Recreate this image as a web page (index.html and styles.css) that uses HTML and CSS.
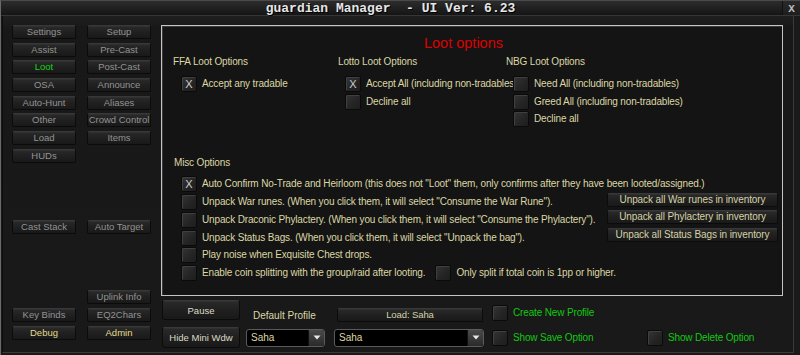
FILE: index.html
```html
<!DOCTYPE html>
<html>
<head>
<meta charset="utf-8">
<link rel="stylesheet" href="styles.css">
</head>
<body>
<div class="window">
  <div class="titlebar">
    <div class="title">guardian Manager&nbsp; - UI Ver: 6.23</div>
    <div class="close">X</div>
  </div>
  <div class="body">
    <nav class="nav">
      <button class="nbtn">Settings</button>
      <button class="nbtn">Assist</button>
      <button class="nbtn active">Loot</button>
      <button class="nbtn">OSA</button>
      <button class="nbtn">Auto-Hunt</button>
      <button class="nbtn">Other</button>
      <button class="nbtn">Load</button>
      <button class="nbtn">HUDs</button>
      <div class="span3"></div>
      <button class="nbtn">Cast Stack</button>
      <div class="span4"></div>
      <button class="nbtn">Key Binds</button>
      <button class="nbtn admin">Debug</button>

      <button class="nbtn">Setup</button>
      <button class="nbtn">Pre-Cast</button>
      <button class="nbtn">Post-Cast</button>
      <button class="nbtn">Announce</button>
      <button class="nbtn">Aliases</button>
      <button class="nbtn">Crowd Control</button>
      <button class="nbtn">Items</button>
      <div class="span4"></div>
      <button class="nbtn">Auto Target</button>
      <div class="span3"></div>
      <button class="nbtn">Uplink Info</button>
      <button class="nbtn">EQ2Chars</button>
      <button class="nbtn admin">Admin</button>
    </nav>

    <div class="main">
      <section class="panel">
        <h1 class="panel-title">Loot options</h1>
        <div class="loot-cols">
          <div class="col col-ffa">
            <h2 class="sec">FFA Loot Options</h2>
            <div class="opts">
              <div class="opt"><span class="cb">X</span><span class="lbl">Accept any tradable</span></div>
            </div>
          </div>
          <div class="col col-lotto">
            <h2 class="sec">Lotto Loot Options</h2>
            <div class="opts">
              <div class="opt"><span class="cb">X</span><span class="lbl">Accept All (including non-tradables)</span></div>
              <div class="opt"><span class="cb"></span><span class="lbl">Decline all</span></div>
            </div>
          </div>
          <div class="col col-nbg">
            <h2 class="sec">NBG Loot Options</h2>
            <div class="opts">
              <div class="opt"><span class="cb"></span><span class="lbl">Need All (including non-tradables)</span></div>
              <div class="opt"><span class="cb"></span><span class="lbl">Greed All (including non-tradables)</span></div>
              <div class="opt"><span class="cb"></span><span class="lbl">Decline all</span></div>
            </div>
          </div>
        </div>

        <h2 class="sec misc-h">Misc Options</h2>
        <div class="misc">
          <div class="opt"><span class="cb">X</span><span class="lbl">Auto Confirm No-Trade and Heirloom (this does not "Loot" them, only confirms after they have been looted/assigned.)</span></div>
          <div class="opt"><span class="cb"></span><span class="lbl">Unpack War runes. (When you click them, it will select "Consume the War Rune").</span><button class="wbtn">Unpack all War runes in inventory</button></div>
          <div class="opt"><span class="cb"></span><span class="lbl">Unpack Draconic Phylactery. (When you click them, it will select "Consume the Phylactery").</span><button class="wbtn">Unpack all Phylactery in inventory</button></div>
          <div class="opt"><span class="cb"></span><span class="lbl">Unpack Status Bags. (When you click them, it will select "Unpack the bag").</span><button class="wbtn">Unpack all Status Bags in inventory</button></div>
          <div class="opt"><span class="cb"></span><span class="lbl">Play noise when Exquisite Chest drops.</span></div>
          <div class="opt"><span class="cb"></span><span class="lbl">Enable coin splitting with the group/raid after looting.</span><span class="cb cb-gap"></span><span class="lbl">Only split if total coin is 1pp or higher.</span></div>
        </div>
      </section>

      <div class="bottom">
        <button class="bbtn pause">Pause</button>
        <div class="dp-label">Default Profile</div>
        <button class="wbtn load">Load: Saha</button>
        <div class="gopt row1"><span class="cb"></span><span class="glbl">Create New Profile</span></div>

        <button class="bbtn hide">Hide Mini Wdw</button>
        <div class="dd dd1"><span class="dd-val">Saha</span><span class="dd-arrow"><svg width="8" height="5" viewBox="0 0 8 5"><path d="M0.5 0.5 L7.5 0.5 L4 4.5 Z" fill="#e8e8e8"/></svg></span></div>
        <div class="dd dd2"><span class="dd-val">Saha</span><span class="dd-arrow"><svg width="8" height="5" viewBox="0 0 8 5"><path d="M0.5 0.5 L7.5 0.5 L4 4.5 Z" fill="#e8e8e8"/></svg></span></div>
        <div class="gopt row2 c4"><span class="cb"></span><span class="glbl">Show Save Option</span></div>
        <div class="gopt row2 c5"><span class="cb"></span><span class="glbl">Show Delete Option</span></div>
      </div>
    </div>
  </div>
</div>
</body>
</html>
```

FILE: styles.css
```css
* { box-sizing: border-box; }
html, body { margin: 0; padding: 0; background: #151515; }
body { width: 800px; height: 355px; overflow: hidden; font-family: "Liberation Sans", Arial, sans-serif; }

.window {
  width: 800px;
  height: 355px;
  background: #1a1a1a;
  border-left: 1px solid #6a6a6a;
  border-top: 1px solid #4a4a4a;
  display: flex;
  flex-direction: column;
}

.titlebar {
  height: 15px;
  display: flex;
  background: linear-gradient(#2c2c2c, #151515);
  border-bottom: 1px solid #363636;
}
.title {
  flex: 1;
  text-align: center;
  padding-right: 2px;
  font-family: "Liberation Mono", "Courier New", monospace;
  font-weight: bold;
  font-size: 13px;
  line-height: 15px;
  color: #e6e6e6;
  text-shadow: 1px 1px 0 #000;
}
.close {
  width: 18px;
  text-align: center;
  font-family: "Liberation Mono", monospace;
  font-weight: bold;
  font-size: 11px;
  line-height: 16px;
  color: #bdbdbd;
  background: linear-gradient(#2a2a2a, #1e1e1e);
  border-left: 1px solid #111;
}

.body {
  flex: 1;
  display: flex;
  gap: 10px;
  padding: 9px 0 0 9px;
  margin: 0 6px 2px 1px;
  border-right: 1px solid #3a3a3a;
  border-bottom: 1px solid #3a3a3a;
  border-left: 1px solid #0c0c0c;
  background: linear-gradient(#1f1f1f, #181818 12px, #191919);
}

/* navigation */
.nav {
  width: 139px;
  display: grid;
  grid-template-columns: 64px 64px;
  grid-template-rows: repeat(18, 14px);
  column-gap: 11px;
  row-gap: 3.7px;
  grid-auto-flow: column;
}
.span3 { grid-row: span 3; }
.span4 { grid-row: span 4; }

.nbtn, .wbtn, .bbtn {
  margin: 0;
  padding: 0;
  font-family: "Liberation Sans", Arial, sans-serif;
  border: 1px solid #0b0b0b;
  border-top-color: #383838;
  border-radius: 2px;
  background: linear-gradient(#2a2a2a, #202020 50%, #191919);
  box-shadow: inset 0 1px 0 #303030;
  white-space: nowrap;
  cursor: default;
}
.nbtn {
  height: 14px;
  font-size: 9.5px;
  line-height: 12px;
  color: #939393;
}
.nbtn.active { color: #14d414; }
.nbtn.admin { color: #e2dc8c; }

/* main */
.main {
  width: 622px;
  display: flex;
  flex-direction: column;
}
.panel {
  height: 271px;
  border: 1px solid #c4c4c4;
  box-shadow: inset 1px 1px 0 #3a3a3a;
  background: #141414;
  padding: 9px 4px 0 11px;
}
.panel-title {
  margin: 0;
  font-weight: normal;
  font-size: 14.5px;
  line-height: 17px;
  color: #dc0000;
  text-align: center;
  padding-right: 24px;
}
.sec {
  margin: 0;
  font-weight: normal;
  font-size: 10px;
  line-height: 14px;
  letter-spacing: -0.15px;
  color: #dcd7a4;
  white-space: nowrap;
}
.loot-cols {
  display: flex;
  margin-top: 3px;
}
.col-ffa { width: 165px; }
.col-lotto { width: 168px; }
.col-nbg { flex: 1; }
.opts {
  display: flex;
  flex-direction: column;
  gap: 1.65px;
  margin-top: 7px;
  padding-left: 7px;
}
.col-ffa .opts { padding-left: 8px; }

.opt {
  display: flex;
  align-items: center;
  height: 16px;
  white-space: nowrap;
}
.cb {
  flex: none;
  position: relative;
  width: 16px;
  height: 16px;
  border: 1px solid #0a0a0a;
  border-radius: 2px;
  background: linear-gradient(135deg, #353535, #242424 60%, #1e1e1e);
  box-shadow: inset 1px 1px 0 #404040;
  color: #cfcfcf;
  font-family: "Liberation Sans", Arial, sans-serif;
  font-size: 11px;
  line-height: 14px;
  text-align: center;
  z-index: 1;
}
.lbl {
  margin-left: 5px;
  font-size: 10px;
  line-height: 14px;
  letter-spacing: -0.15px;
  color: #dcd7a4;
}

.misc-h { margin-top: 29px; padding-left: 1px; }
.misc {
  display: flex;
  flex-direction: column;
  gap: 1.8px;
  margin-top: 6px;
  padding-left: 8px;
}
.wbtn {
  height: 14px;
  font-size: 10px;
  line-height: 12px;
  letter-spacing: -0.1px;
  color: #d6d2a6;
}
.misc .wbtn {
  width: 171px;
  margin-left: auto;
  align-self: flex-start;
  margin-top: -1.4px;
}
.cb-gap { margin-left: 10px; }

/* bottom controls */
.bottom {
  margin-top: 4px;
  padding-left: 1px;
  display: grid;
  grid-template-columns: 84px 88px 158px 155px 1fr;
  grid-template-rows: 22px 21px;
  row-gap: 5px;
}
.bbtn {
  width: 78px;
  font-size: 9.5px;
  color: #dcdac4;
  border-radius: 3px;
}
.pause { grid-row: 1; grid-column: 1; height: 20px; align-self: start; }
.hide { grid-row: 2; grid-column: 1; height: 21px; }
.dp-label {
  grid-row: 1;
  grid-column: 2;
  align-self: end;
  margin-left: 7px;
  margin-bottom: -1px;
  font-size: 10px;
  line-height: 14px;
  color: #dcd7a4;
  white-space: nowrap;
}
.load {
  grid-row: 1;
  grid-column: 3;
  width: 146px;
  margin-left: 3px;
  align-self: end;
  font-size: 9.5px;
}
.gopt {
  display: flex;
  align-items: center;
  height: 16px;
  white-space: nowrap;
}
.gopt.row1 { grid-row: 1; grid-column: 4; align-self: end; margin-bottom: 1px; }
.gopt.row2 { grid-row: 2; align-self: center; }
.gopt.c4 { grid-column: 4; }
.gopt.c5 { grid-column: 5; }
.glbl {
  margin-left: 5px;
  font-size: 10px;
  line-height: 14px;
  letter-spacing: -0.15px;
  color: #12c812;
}
.dd {
  grid-row: 2;
  height: 18px;
  align-self: center;
  display: flex;
  align-items: stretch;
  background: #000;
  border: 1px solid #5a5a5a;
  border-radius: 3px;
  overflow: hidden;
}
.dd1 { grid-column: 2; width: 79px; }
.dd2 { grid-column: 3; width: 150px; }
.dd-val {
  flex: 1;
  padding-left: 4px;
  font-size: 10px;
  line-height: 16px;
  color: #dcd7a4;
}
.dd-arrow {
  width: 16px;
  display: flex;
  align-items: center;
  justify-content: center;
  background: linear-gradient(#4a4a4a, #2a2a2a);
  border-left: 1px solid #111;
}
```
